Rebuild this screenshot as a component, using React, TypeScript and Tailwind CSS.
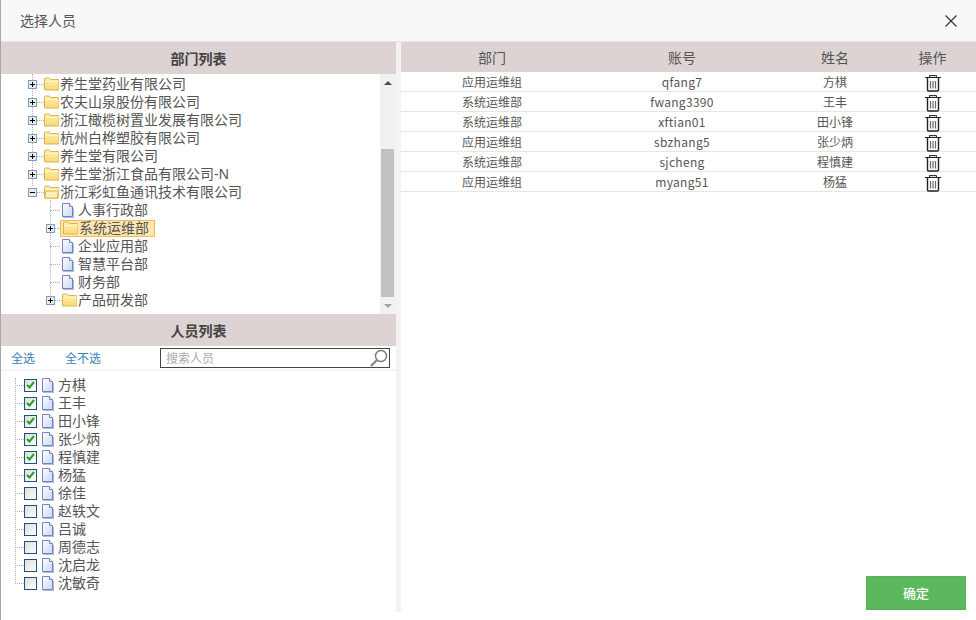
import React from "react";

const treeFont = { fontFamily: '"Liberation Sans", "Noto Sans CJK SC", sans-serif' };
const cjkFont = { fontFamily: '"Noto Sans CJK SC", "Liberation Sans", sans-serif' };

function Folder({ open = false }: { open?: boolean }) {
  return (
    <svg width="15" height="14" viewBox="0 0 15 14" className="shrink-0">
      <defs>
        <linearGradient id="fg" x1="0" y1="0" x2="0" y2="1">
          <stop offset="0" stopColor="#fff0b0" />
          <stop offset="1" stopColor="#f8d873" />
        </linearGradient>
      </defs>
      <path d="M0.5 13V2a1 1 0 0 1 1-1h3.5l1.5 1.5h7.5a1 1 0 0 1 1 1V13z" fill="url(#fg)" stroke="#d9b45b" />
      <path d="M1.5 4.5h12" stroke="#fff6cf" />
      {open && <path d="M0.5 13l1.5-7h12.5l-1.5 7z" fill="#fff0b8" stroke="#d9b45b" />}
    </svg>
  );
}

function FileIcon() {
  return (
    <svg width="12" height="15" viewBox="0 0 12 15" className="shrink-0">
      <defs>
        <linearGradient id="pg" x1="0" y1="0" x2="1" y2="1">
          <stop offset="0" stopColor="#ffffff" />
          <stop offset="1" stopColor="#c4d8f8" />
        </linearGradient>
      </defs>
      <path d="M0.5 0.5h7l3 3v10h-10z" fill="url(#pg)" stroke="#7683c2" />
      <path d="M7.5 0.5v3h3" fill="#ffffff" stroke="#7683c2" />
      <path d="M1 14.5h11M11.5 5v9.5" stroke="#b3b8d8" />
    </svg>
  );
}

function Toggle({ minus = false }: { minus?: boolean }) {
  return (
    <span className="relative block w-[9px] h-[9px] shrink-0 border border-[#7f9db9] bg-[#e8ebf0]">
      <span className="absolute left-[1px] right-[1px] top-[3px] h-[1px] bg-black" />
      {!minus && <span className="absolute top-[1px] bottom-[1px] left-[3px] w-[1px] bg-black" />}
    </span>
  );
}

function Dash({ w }: { w: string }) {
  return <span className={`block border-t border-dotted border-[#b0b0b0] shrink-0 ${w}`} />;
}

function TopRow({ label, minus = false }: { label: string; minus?: boolean }) {
  return (
    <div className="flex items-center h-[18px] pl-[27px]">
      <Toggle minus={minus} />
      <Dash w="w-[7px]" />
      <Folder open={minus} />
      <span className="ml-[1px] text-[14px] leading-[18px] text-[#555]">{label}</span>
    </div>
  );
}

function FileRow({ label }: { label: string }) {
  return (
    <div className="flex items-center h-[18px] pl-[49px]">
      <Dash w="w-[10px]" />
      <span className="ml-[2px]">
        <FileIcon />
      </span>
      <span className="ml-[4px] text-[14px] leading-[18px] text-[#555]">{label}</span>
    </div>
  );
}

function FolderRow({ label, selected = false }: { label: string; selected?: boolean }) {
  return (
    <div className="flex items-center h-[18px] pl-[45px]">
      <Toggle />
      {selected ? (
        <>
          <Dash w="w-[5px]" />
          <span className="flex items-center h-[17px] w-[95px] border border-[#ffb951] bg-[#ffe6b0] pl-[2px]">
            <Folder />
            <span className="text-[14px] leading-[15px] ml-[1px] text-[#555]">{label}</span>
          </span>
        </>
      ) : (
        <>
          <Dash w="w-[7px]" />
          <Folder />
          <span className="ml-[1px] text-[14px] leading-[18px] text-[#555]">{label}</span>
        </>
      )}
    </div>
  );
}

function PersonRow({ name, checked }: { name: string; checked: boolean }) {
  return (
    <div className="flex items-center h-[18px] pl-[14px]">
      <Dash w="w-[9px]" />
      <span className="flex items-center justify-center w-[13px] h-[13px] shrink-0 border border-[#1c5180] bg-gradient-to-br from-[#dcdcd7] to-[#ffffff]">
        {checked && (
          <svg width="9" height="8" viewBox="0 0 9 8">
            <path d="M1 4l2.5 2.5L8 1" fill="none" stroke="#21a121" strokeWidth="2" />
          </svg>
        )}
      </span>
      <span className="ml-[5px]">
        <FileIcon />
      </span>
      <span className="ml-[4px] text-[14px] leading-[18px] text-[#555]">{name}</span>
    </div>
  );
}

function Trash() {
  return (
    <svg width="16" height="17" viewBox="0 0 16 17" className="mt-[3px]">
      <path d="M4.5 2.5V0.5h7v2" fill="#ddd" stroke="#333" />
      <path d="M0 2.5h16" stroke="#222" />
      <path d="M2.5 3v12a1 1 0 0 0 1 1h9a1 1 0 0 0 1-1V3" fill="#fff" stroke="#222" strokeWidth="1.4" />
      <path d="M5.5 6v7.5M8 6v7.5M10.5 6v7.5" stroke="#666" strokeWidth="1.2" />
    </svg>
  );
}

const rows = [
  ["应用运维组", "qfang7", "方棋"],
  ["系统运维部", "fwang3390", "王丰"],
  ["系统运维部", "xftian01", "田小锋"],
  ["应用运维组", "sbzhang5", "张少炳"],
  ["系统运维部", "sjcheng", "程慎建"],
  ["应用运维组", "myang51", "杨猛"],
];

const people: [string, boolean][] = [
  ["方棋", true], ["王丰", true], ["田小锋", true], ["张少炳", true], ["程慎建", true], ["杨猛", true],
  ["徐佳", false], ["赵轶文", false], ["吕诚", false], ["周德志", false], ["沈启龙", false], ["沈敏奇", false],
];

const grid = "grid grid-cols-[182px_198px_108px_87px]";

export default function App() {
  return (
    <div style={cjkFont} className="w-[976px] h-[620px] overflow-hidden flex flex-col bg-white border-l border-[#a8a8a8]">
      <div className="h-[42px] shrink-0 bg-[#f8f8f8] border-b border-[#e5e5e5] flex items-center justify-between pl-[19px] pr-[19px]">
        <span className="text-[14px] text-[#555]">选择人员</span>
        <svg width="12" height="12" viewBox="0 0 12 12">
          <path d="M0.5 0.5l11 11M11.5 0.5l-11 11" stroke="#333" strokeWidth="1.2" />
        </svg>
      </div>
      <div className="flex h-[570px] shrink-0">
        <div className="w-[395px] shrink-0 flex flex-col">
          <div className="h-[32px] shrink-0 bg-[#ddd3d3] flex items-center justify-center text-[14px] font-bold text-[#444]">部门列表</div>
          <div className="h-[240px] shrink-0 flex">
            <div style={treeFont} className="relative flex-1 overflow-hidden pt-[1px]">
              <div className="absolute left-[31px] top-0 h-[112px] border-l border-dotted border-[#b0b0b0]" />
              <div className="absolute left-[49px] top-[126px] h-[100px] border-l border-dotted border-[#b0b0b0]" />
              <div className="relative">
                <TopRow label="养生堂药业有限公司" />
                <TopRow label="农夫山泉股份有限公司" />
                <TopRow label="浙江橄榄树置业发展有限公司" />
                <TopRow label="杭州白桦塑胶有限公司" />
                <TopRow label="养生堂有限公司" />
                <TopRow label="养生堂浙江食品有限公司-N" />
                <TopRow label="浙江彩虹鱼通讯技术有限公司" minus />
                <FileRow label="人事行政部" />
                <FolderRow label="系统运维部" selected />
                <FileRow label="企业应用部" />
                <FileRow label="智慧平台部" />
                <FileRow label="财务部" />
                <FolderRow label="产品研发部" />
              </div>
            </div>
            <div className="w-[16px] shrink-0 bg-[#f1f1f1] flex flex-col items-start">
              <div className="h-[75px] w-full flex justify-center pt-[7px]">
                <span className="block w-0 h-0 border-x-[4px] border-x-transparent border-b-[4px] border-b-[#505050]" />
              </div>
              <div className="w-[13px] h-[148px] ml-[1px] bg-[#c1c1c1]" />
              <div className="flex-1 w-full flex items-center justify-center">
                <span className="block w-0 h-0 border-x-[4px] border-x-transparent border-t-[4px] border-t-[#a3a3a3]" />
              </div>
            </div>
          </div>
          <div className="h-[32px] shrink-0 bg-[#ddd3d3] flex items-center justify-center text-[14px] font-bold text-[#444]">人员列表</div>
          <div className="h-[25px] shrink-0 flex items-center border-b-2 border-[#f5f5f5]">
            <span className="ml-[10px] w-[54px] text-[12px] text-[#3c7fb8]">全选</span>
            <span className="w-[95px] text-[12px] text-[#3c7fb8]">全不选</span>
            <div className="w-[230px] h-[20px] border border-[#444] flex items-center justify-between pl-[5px] pr-[1px]">
              <span className="text-[12px] leading-[18px] text-[#aaa]">搜索人员</span>
              <svg width="18" height="18" viewBox="0 0 18 18">
                <circle cx="11" cy="7" r="5.5" fill="none" stroke="#777" strokeWidth="1.4" />
                <path d="M7 11l-6 6" stroke="#888" strokeWidth="2.4" />
              </svg>
            </div>
          </div>
          <div style={treeFont} className="relative flex-1 pt-[5px]">
            <div className="absolute left-[14px] top-[7px] h-[206px] border-l border-dotted border-[#b0b0b0]" />
            <div className="relative">
              {people.map(([n, c]) => (
                <PersonRow key={n} name={n} checked={c} />
              ))}
            </div>
          </div>
        </div>
        <div className="w-[5px] shrink-0 bg-[#f3f3f3]" />
        <div className="flex-1 flex flex-col relative">
          <div className={`${grid} h-[30px] shrink-0 bg-[#ddd3d3] items-center text-center text-[14px] text-[#555]`}>
            <span>部门</span>
            <span>账号</span>
            <span>姓名</span>
            <span>操作</span>
          </div>
          {rows.map((r) => (
            <div key={r[1]} className={`${grid} h-[20px] shrink-0 items-center text-center text-[12px] text-[#555] border-b border-[#eee3e3]`}>
              <span>{r[0]}</span>
              <span className="tracking-[0.3px]">{r[1]}</span>
              <span>{r[2]}</span>
              <span className="flex justify-center h-[20px]">
                <Trash />
              </span>
            </div>
          ))}
          <div className="flex-1 flex items-end justify-end pr-[10px] pb-[2px]">
            <button className="w-[100px] h-[34px] bg-[#5cb85c] border border-[#58b058] text-white text-[13px] font-medium">确定</button>
          </div>
        </div>
      </div>
      <div className="flex-1 bg-white" />
    </div>
  );
}
